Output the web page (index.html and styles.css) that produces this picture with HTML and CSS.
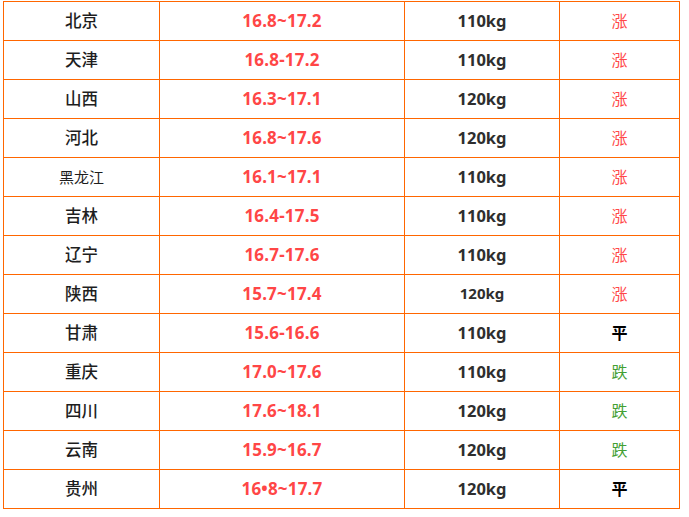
FILE: index.html
```html
<!DOCTYPE html>
<html lang="zh">
<head>
<meta charset="utf-8">
<title>生猪价格</title>
<link rel="stylesheet" href="styles.css">
</head>
<body>
<div class="price-table">
  <div class="cell prov">北京</div><div class="cell price">16.8~17.2</div><div class="cell weight">110kg</div><div class="cell trend up">涨</div>
  <div class="cell prov">天津</div><div class="cell price">16.8-17.2</div><div class="cell weight">110kg</div><div class="cell trend up">涨</div>
  <div class="cell prov">山西</div><div class="cell price">16.3~17.1</div><div class="cell weight">120kg</div><div class="cell trend up">涨</div>
  <div class="cell prov">河北</div><div class="cell price">16.8~17.6</div><div class="cell weight">120kg</div><div class="cell trend up">涨</div>
  <div class="cell prov small">黑龙江</div><div class="cell price">16.1~17.1</div><div class="cell weight">110kg</div><div class="cell trend up">涨</div>
  <div class="cell prov">吉林</div><div class="cell price">16.4-17.5</div><div class="cell weight">110kg</div><div class="cell trend up">涨</div>
  <div class="cell prov">辽宁</div><div class="cell price">16.7-17.6</div><div class="cell weight">110kg</div><div class="cell trend up">涨</div>
  <div class="cell prov">陕西</div><div class="cell price">15.7~17.4</div><div class="cell weight narrow">120kg</div><div class="cell trend up">涨</div>
  <div class="cell prov">甘肃</div><div class="cell price">15.6-16.6</div><div class="cell weight">110kg</div><div class="cell trend flat">平</div>
  <div class="cell prov">重庆</div><div class="cell price">17.0~17.6</div><div class="cell weight">110kg</div><div class="cell trend down">跌</div>
  <div class="cell prov">四川</div><div class="cell price">17.6~18.1</div><div class="cell weight">120kg</div><div class="cell trend down">跌</div>
  <div class="cell prov">云南</div><div class="cell price">15.9~16.7</div><div class="cell weight">120kg</div><div class="cell trend down">跌</div>
  <div class="cell prov">贵州</div><div class="cell price">16•8~17.7</div><div class="cell weight">120kg</div><div class="cell trend flat">平</div>
</div>
</body>
</html>
```

FILE: styles.css
```css
html, body {
  background: #ffffff;
}
body {
  margin: 0;
  padding: 1px 0 0 3px;
}
.price-table {
  display: grid;
  grid-template-columns: 155px 244px 154px 119px;
  grid-auto-rows: 38px;
  gap: 1px;
  padding: 1px;
  width: max-content;
  background: #ff6600;
}
.cell {
  background: #ffffff;
  display: flex;
  align-items: center;
  justify-content: center;
  padding-bottom: 2px;
  font-family: "Noto Sans", "Noto Sans CJK SC", sans-serif;
  font-size: 16px;
  font-weight: 700;
  color: #333333;
}
.prov {
  font-family: "Noto Sans CJK SC", sans-serif;
  font-size: 16.5px;
  font-weight: 500;
  color: #1e1e1e;
}
.prov.small {
  font-size: 15px;
  font-weight: 400;
}
.price {
  font-size: 17px;
  letter-spacing: 0.2px;
  color: #ff4646;
}
.weight {
  font-size: 16.5px;
  color: #2e2e2e;
}
.weight.narrow {
  font-size: 15px;
}
.trend {
  font-family: "Noto Sans CJK SC", sans-serif;
  font-size: 16px;
}
.trend.up {
  color: #ff4848;
  font-weight: 400;
}
.trend.down {
  color: #44a033;
  font-weight: 400;
}
.trend.flat {
  color: #000000;
  font-weight: 700;
}
```
